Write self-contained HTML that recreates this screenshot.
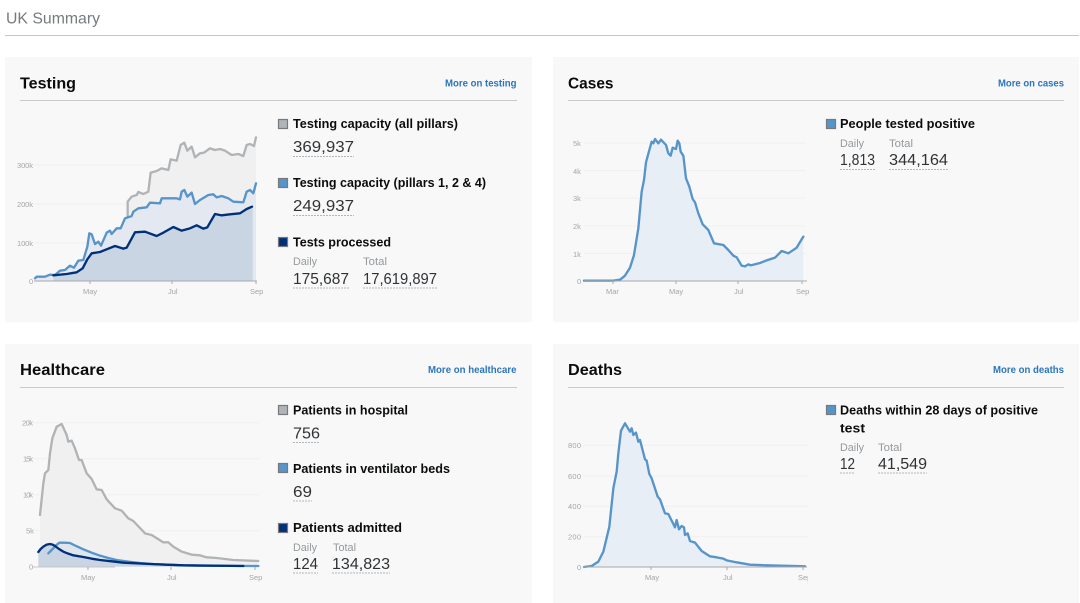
<!DOCTYPE html>
<html lang="en">
<head>
<meta charset="utf-8">
<title>UK Summary</title>
<style>
html,body{margin:0;padding:0;background:#fff;width:1080px;height:603px;overflow:hidden}
svg{display:block;font-family:"Liberation Sans",sans-serif;filter:blur(.3px)}
.h{font-size:16px;font-weight:700;fill:#0b0c0c}
.m{font-size:10px;font-weight:700;fill:#2b76bc}
.l{font-size:12.5px;font-weight:700;fill:#0b0c0c}
.n{font-size:16px;fill:#303336}
.s{font-size:11px;fill:#959a9d}
.a{font-size:7.5px;fill:#a3a6a8}
.rule{stroke:#c9cacb;stroke-width:1}
.d{stroke:#b4b6b8;stroke-width:1;stroke-dasharray:2 1;fill:none}
.g{stroke:#f0f0f0;stroke-width:1}
.ax{stroke:#a8a9aa;stroke-width:1}
.ln{fill:none;stroke-width:7;stroke-linejoin:round;stroke-linecap:round}
</style>
</head>
<body>
<svg width="1080" height="603" viewBox="0 0 1080 603" xmlns="http://www.w3.org/2000/svg">
<defs>
<clipPath id="c4"><rect x="560" y="410" width="248" height="193"/></clipPath>
</defs>
<rect width="1080" height="603" fill="#fff"/>
<text x="6" y="23.5" font-size="16" fill="#777b7e" textLength="94" lengthAdjust="spacingAndGlyphs">UK Summary</text>
<line x1="5" y1="35.5" x2="1079" y2="35.5" stroke="#c4c5c6"/>

<rect x="5" y="57" width="527" height="265" fill="#f8f8f8"/>
<rect x="553" y="57" width="526" height="265" fill="#f8f8f8"/>
<rect x="5" y="344" width="527" height="259" fill="#f8f8f8"/>
<rect x="553" y="344" width="526" height="259" fill="#f8f8f8"/>

<line class="rule" x1="20" y1="100.5" x2="517" y2="100.5"/>
<line class="rule" x1="568" y1="100.5" x2="1064" y2="100.5"/>
<line class="rule" x1="20" y1="387.5" x2="517" y2="387.5"/>
<line class="rule" x1="568" y1="387.5" x2="1064" y2="387.5"/>

<text class="h" x="20" y="88.5" textLength="56" lengthAdjust="spacingAndGlyphs">Testing</text>
<text class="m" x="445" y="86.5" textLength="71.5" lengthAdjust="spacingAndGlyphs">More on testing</text>
<text class="h" x="568" y="88.5" textLength="45.5" lengthAdjust="spacingAndGlyphs">Cases</text>
<text class="m" x="998" y="86.5" textLength="66" lengthAdjust="spacingAndGlyphs">More on cases</text>
<text class="h" x="20" y="375" textLength="85" lengthAdjust="spacingAndGlyphs">Healthcare</text>
<text class="m" x="428" y="373" textLength="88.5" lengthAdjust="spacingAndGlyphs">More on healthcare</text>
<text class="h" x="568" y="375" textLength="54" lengthAdjust="spacingAndGlyphs">Deaths</text>
<text class="m" x="993" y="373" textLength="71" lengthAdjust="spacingAndGlyphs">More on deaths</text>

<!-- Testing chart -->
<line class="g" x1="34" y1="165" x2="256" y2="165"/>
<line class="g" x1="34" y1="204" x2="256" y2="204"/>
<line class="g" x1="34" y1="243" x2="256" y2="243"/>
<g transform="translate(0,100) scale(.33333)">
<polygon fill="#f0f0f1" points="383,543 383,350 383,305 395,290 410,285 415,276 430,282 445,275 452,218 470,213 485,205 505,210 512,178 530,182 542,135 553,128 562,152 575,140 585,172 600,160 612,158 630,145 645,150 660,147 675,152 695,165 715,162 730,168 740,135 750,132 762,138 768,112 768,543"/>
<polygon fill="#e4e9f1" points="105,543 105,535 110,530 135,530 150,524 165,525 180,512 195,510 210,497 222,503 235,482 250,480 262,440 268,400 275,403 285,432 295,425 303,437 320,398 330,392 335,402 350,385 362,385 375,355 395,348 400,335 415,325 440,322 450,308 480,310 485,295 510,295 530,295 540,298 545,275 553,270 562,290 575,278 585,312 600,300 625,285 640,283 650,292 665,288 685,295 700,305 730,307 740,275 750,270 760,280 768,250 768,543"/>
<polygon fill="#c9d5e3" points="160,543 160,526 200,522 230,517 248,505 262,478 275,460 300,456 320,448 345,438 370,446 380,443 405,397 435,395 470,408 490,398 520,381 545,392 570,385 590,376 610,386 622,382 645,342 665,346 690,343 720,340 740,327 758,320 758,543"/>
<polyline class="ln" stroke="#b1b4b6" points="383,350 383,305 395,290 410,285 415,276 430,282 445,275 452,218 470,213 485,205 505,210 512,178 530,182 542,135 553,128 562,152 575,140 585,172 600,160 612,158 630,145 645,150 660,147 675,152 695,165 715,162 730,168 740,135 750,132 762,138 768,112"/>
<polyline class="ln" stroke="#5694ca" points="105,535 110,530 135,530 150,524 165,525 180,512 195,510 210,497 222,503 235,482 250,480 262,440 268,400 275,403 285,432 295,425 303,437 320,398 330,392 335,402 350,385 362,385 375,355 395,348 400,335 415,325 440,322 450,308 480,310 485,295 510,295 530,295 540,298 545,275 553,270 562,290 575,278 585,312 600,300 625,285 640,283 650,292 665,288 685,295 700,305 730,307 740,275 750,270 760,280 768,250"/>
<polyline class="ln" stroke="#003078" points="160,526 200,522 230,517 248,505 262,478 275,460 300,456 320,448 345,438 370,446 380,443 405,397 435,395 470,408 490,398 520,381 545,392 570,385 590,376 610,386 622,382 645,342 665,346 690,343 720,340 740,327 756,320"/>
</g>
<line class="ax" x1="34" y1="281" x2="257" y2="281"/>
<line class="ax" x1="90" y1="281" x2="90" y2="284"/>
<line class="ax" x1="172" y1="281" x2="172" y2="284"/>
<line class="ax" x1="256" y1="281" x2="256" y2="284"/>
<text class="a" x="17" y="168" textLength="16">300k</text>
<text class="a" x="17" y="207" textLength="16">200k</text>
<text class="a" x="17" y="246" textLength="16">100k</text>
<text class="a" x="29" y="284">0</text>
<text class="a" x="83" y="294">May</text>
<text class="a" x="168" y="294">Jul</text>
<text class="a" x="250" y="294">Sep</text>

<!-- Cases chart -->
<line class="g" x1="584" y1="143" x2="806" y2="143"/>
<line class="g" x1="584" y1="170.5" x2="806" y2="170.5"/>
<line class="g" x1="584" y1="198" x2="806" y2="198"/>
<line class="g" x1="584" y1="226" x2="806" y2="226"/>
<line class="g" x1="584" y1="253.5" x2="806" y2="253.5"/>
<g transform="translate(560,125) scale(.33333)">
<polygon fill="#e8eef6" points="72,467 160,467 180,464 195,452 210,428 222,390 235,310 245,200 252,165 258,112 268,75 275,50 280,55 285,42 295,55 303,44 318,60 325,85 332,92 338,68 348,72 353,47 358,55 362,80 370,92 378,160 388,185 398,222 405,232 415,265 428,298 445,315 462,355 490,360 505,375 520,392 530,397 545,422 555,424 565,418 572,421 600,414 620,406 645,398 665,378 685,385 710,368 730,335 730,467"/>
<polyline class="ln" stroke="#5694ca" points="72,467 160,467 180,464 195,452 210,428 222,390 235,310 245,200 252,165 258,112 268,75 275,50 280,55 285,42 295,55 303,44 318,60 325,85 332,92 338,68 348,72 353,47 358,55 362,80 370,92 378,160 388,185 398,222 405,232 415,265 428,298 445,315 462,355 490,360 505,375 520,392 530,397 545,422 555,424 565,418 572,421 600,414 620,406 645,398 665,378 685,385 710,368 730,335"/>
</g>
<line class="ax" x1="584" y1="281" x2="807" y2="281"/>
<line class="ax" x1="613" y1="281" x2="613" y2="284"/>
<line class="ax" x1="676" y1="281" x2="676" y2="284"/>
<line class="ax" x1="738" y1="281" x2="738" y2="284"/>
<line class="ax" x1="802" y1="281" x2="802" y2="284"/>
<text class="a" x="573" y="146">5k</text>
<text class="a" x="573" y="174">4k</text>
<text class="a" x="573" y="201">3k</text>
<text class="a" x="573" y="229">2k</text>
<text class="a" x="573" y="257">1k</text>
<text class="a" x="577" y="284">0</text>
<text class="a" x="606" y="294">Mar</text>
<text class="a" x="669" y="294">May</text>
<text class="a" x="734" y="294">Jul</text>
<text class="a" x="796" y="294">Sep</text>

<!-- Healthcare chart -->
<line class="g" x1="33" y1="422.7" x2="259" y2="422.7"/>
<line class="g" x1="33" y1="458.7" x2="259" y2="458.7"/>
<line class="g" x1="33" y1="494.7" x2="259" y2="494.7"/>
<line class="g" x1="33" y1="530.7" x2="259" y2="530.7"/>
<g transform="translate(0,410) scale(.33333)">
<polygon fill="#f0f0f1" points="120,470 120,315 130,220 135,190 145,180 150,130 157,85 170,50 185,42 200,75 205,95 215,92 225,115 237,150 245,150 260,190 275,207 290,238 305,240 320,268 345,295 365,302 385,325 400,333 435,370 455,375 490,397 505,397 520,410 545,425 575,434 600,436 620,442 650,444 700,450 775,453 775,470"/>
<polygon fill="#dfe6ef" points="145,470 145,430 152,423 160,415 168,406 178,398 195,398 210,399 228,408 250,418 275,428 300,437 325,444 350,450 385,455 420,459 460,462 500,464 550,466 600,467 775,468 775,470"/>
<polygon fill="#c9d5e3" points="115,470 115,426 122,417 130,410 140,404 150,402 158,404 165,408 177,417 190,425 205,431 220,436 250,441 275,446 300,450 335,454 370,458 410,460 450,462 500,464 550,466 730,468 730,470"/>
<polyline class="ln" stroke="#b1b4b6" points="120,315 130,220 135,190 145,180 150,130 157,85 170,50 185,42 200,75 205,95 215,92 225,115 237,150 245,150 260,190 275,207 290,238 305,240 320,268 345,295 365,302 385,325 400,333 435,370 455,375 490,397 505,397 520,410 545,425 575,434 600,436 620,442 650,444 700,450 775,453"/>
<polyline class="ln" stroke="#5694ca" points="145,430 152,423 160,415 168,406 178,398 195,398 210,399 228,408 250,418 275,428 300,437 325,444 350,450 385,455 420,459 460,462 500,464 550,466 600,467 775,468"/>
<polyline class="ln" stroke="#003078" points="115,426 122,417 130,410 140,404 150,402 158,404 165,408 177,417 190,425 205,431 220,436 250,441 275,446 300,450 335,454 370,458 410,460 450,462 500,464 550,466 730,468"/>
</g>
<line class="ax" x1="33" y1="567" x2="115" y2="567" stroke-opacity=".6"/>
<line class="ax" x1="88" y1="567" x2="88" y2="570"/>
<line class="ax" x1="171" y1="567" x2="171" y2="570"/>
<line class="ax" x1="255" y1="567" x2="255" y2="570"/>
<text class="a" x="22" y="425.5" textLength="11">20k</text>
<text class="a" x="23" y="461.5" textLength="10">15k</text>
<text class="a" x="23" y="497.5" textLength="10">10k</text>
<text class="a" x="26" y="533.5">5k</text>
<text class="a" x="29" y="569.5">0</text>
<text class="a" x="81" y="580">May</text>
<text class="a" x="167" y="580">Jul</text>
<text class="a" x="249" y="580">Sep</text>

<!-- Deaths chart -->
<line class="g" x1="583" y1="445.3" x2="808" y2="445.3"/>
<line class="g" x1="583" y1="476" x2="808" y2="476"/>
<line class="g" x1="583" y1="506.3" x2="808" y2="506.3"/>
<line class="g" x1="583" y1="536.7" x2="808" y2="536.7"/>
<g transform="translate(560,410) scale(.33333)">
<polygon fill="#e8eef6" points="72,471 95,468 115,455 130,425 148,350 160,235 170,185 175,130 183,62 195,40 210,65 215,55 220,75 228,68 235,95 240,90 255,148 260,152 268,192 275,205 293,260 300,268 315,310 325,312 345,352 350,330 357,358 365,348 372,352 375,375 383,370 390,393 405,398 425,423 450,439 470,442 490,446 500,451 530,457 570,464 620,466 735,469 735,471"/>
<polyline class="ln" stroke="#5694ca" points="72,471 95,468 115,455 130,425 148,350 160,235 170,185 175,130 183,62 195,40 210,65 215,55 220,75 228,68 235,95 240,90 255,148 260,152 268,192 275,205 293,260 300,268 315,310 325,312 345,352 350,330 357,358 365,348 372,352 375,375 383,370 390,393 405,398 425,423 450,439 470,442 490,446 500,451 530,457 570,464 620,466 735,469"/>
</g>
<line class="ax" x1="583" y1="567" x2="807" y2="567"/>
<line class="ax" x1="651" y1="567" x2="651" y2="570"/>
<line class="ax" x1="727" y1="567" x2="727" y2="570"/>
<line class="ax" x1="803" y1="567" x2="803" y2="570"/>
<text class="a" x="568" y="448" textLength="13">800</text>
<text class="a" x="568" y="479" textLength="13">600</text>
<text class="a" x="568" y="509" textLength="13">400</text>
<text class="a" x="568" y="539.5" textLength="13">200</text>
<text class="a" x="577" y="570">0</text>
<text class="a" x="645" y="580">May</text>
<text class="a" x="723" y="580">Jul</text>
<g clip-path="url(#c4)"><text class="a" x="798" y="580">Sep</text></g>

<!-- Swatches -->
<g stroke="#77797c" stroke-width="1.2">
<rect x="278.5" y="119.5" width="9" height="9" fill="#b1b4b6"/>
<rect x="278.5" y="178.5" width="9" height="9" fill="#5694ca"/>
<rect x="278.5" y="237.5" width="9" height="9" fill="#003078"/>
<rect x="826.5" y="119.5" width="9" height="9" fill="#5694ca"/>
<rect x="278.5" y="405.5" width="9" height="9" fill="#b1b4b6"/>
<rect x="278.5" y="463.5" width="9" height="9" fill="#5694ca"/>
<rect x="278.5" y="523.5" width="9" height="9" fill="#003078"/>
<rect x="826.5" y="405.5" width="9" height="9" fill="#5694ca"/>
</g>

<!-- Testing text -->
<text class="l" x="293" y="128" textLength="165" lengthAdjust="spacingAndGlyphs">Testing capacity (all pillars)</text>
<text class="n" x="293" y="152" textLength="61" lengthAdjust="spacingAndGlyphs">369,937</text>
<line class="d" x1="293" y1="156.5" x2="354" y2="156.5"/>
<text class="l" x="293" y="187" textLength="193" lengthAdjust="spacingAndGlyphs">Testing capacity (pillars 1, 2 &amp; 4)</text>
<text class="n" x="293" y="211" textLength="61" lengthAdjust="spacingAndGlyphs">249,937</text>
<line class="d" x1="293" y1="215.5" x2="354" y2="215.5"/>
<text class="l" x="293" y="246.5" textLength="98" lengthAdjust="spacingAndGlyphs">Tests processed</text>
<text class="s" x="293" y="265" textLength="24" lengthAdjust="spacingAndGlyphs">Daily</text>
<text class="s" x="363" y="265" textLength="24" lengthAdjust="spacingAndGlyphs">Total</text>
<text class="n" x="293" y="284" textLength="56" lengthAdjust="spacingAndGlyphs">175,687</text>
<text class="n" x="363" y="284" textLength="74" lengthAdjust="spacingAndGlyphs">17,619,897</text>
<line class="d" x1="293" y1="288" x2="349" y2="288"/>
<line class="d" x1="363" y1="288" x2="437" y2="288"/>

<!-- Cases text -->
<text class="l" x="840" y="128" textLength="135" lengthAdjust="spacingAndGlyphs">People tested positive</text>
<text class="s" x="840" y="147" textLength="24" lengthAdjust="spacingAndGlyphs">Daily</text>
<text class="s" x="889" y="147" textLength="24" lengthAdjust="spacingAndGlyphs">Total</text>
<text class="n" x="840" y="165" textLength="35" lengthAdjust="spacingAndGlyphs">1,813</text>
<text class="n" x="889" y="165" textLength="59" lengthAdjust="spacingAndGlyphs">344,164</text>
<line class="d" x1="840" y1="169.5" x2="876" y2="169.5"/>
<line class="d" x1="889" y1="169.5" x2="948" y2="169.5"/>

<!-- Healthcare text -->
<text class="l" x="293" y="414.5" textLength="115" lengthAdjust="spacingAndGlyphs">Patients in hospital</text>
<text class="n" x="293" y="438.5" textLength="27" lengthAdjust="spacingAndGlyphs">756</text>
<line class="d" x1="293" y1="442.5" x2="320" y2="442.5"/>
<text class="l" x="293" y="473" textLength="157" lengthAdjust="spacingAndGlyphs">Patients in ventilator beds</text>
<text class="n" x="293" y="497" textLength="19" lengthAdjust="spacingAndGlyphs">69</text>
<line class="d" x1="293" y1="501" x2="312" y2="501"/>
<text class="l" x="293" y="532" textLength="109" lengthAdjust="spacingAndGlyphs">Patients admitted</text>
<text class="s" x="293" y="551" textLength="24" lengthAdjust="spacingAndGlyphs">Daily</text>
<text class="s" x="333" y="551" textLength="23" lengthAdjust="spacingAndGlyphs">Total</text>
<text class="n" x="293" y="569" textLength="25" lengthAdjust="spacingAndGlyphs">124</text>
<text class="n" x="332" y="569" textLength="58" lengthAdjust="spacingAndGlyphs">134,823</text>
<line class="d" x1="293" y1="573" x2="318" y2="573"/>
<line class="d" x1="332" y1="573" x2="390" y2="573"/>

<!-- Deaths text -->
<text class="l" x="840" y="414.5" textLength="198" lengthAdjust="spacingAndGlyphs">Deaths within 28 days of positive</text>
<text class="l" x="840" y="432.5" textLength="25" lengthAdjust="spacingAndGlyphs">test</text>
<text class="s" x="840" y="451" textLength="24" lengthAdjust="spacingAndGlyphs">Daily</text>
<text class="s" x="878" y="451" textLength="24" lengthAdjust="spacingAndGlyphs">Total</text>
<text class="n" x="840" y="469" textLength="15" lengthAdjust="spacingAndGlyphs">12</text>
<text class="n" x="878" y="469" textLength="49" lengthAdjust="spacingAndGlyphs">41,549</text>
<line class="d" x1="840" y1="473" x2="855" y2="473"/>
<line class="d" x1="878" y1="473" x2="927" y2="473"/>
</svg>
</body>
</html>
